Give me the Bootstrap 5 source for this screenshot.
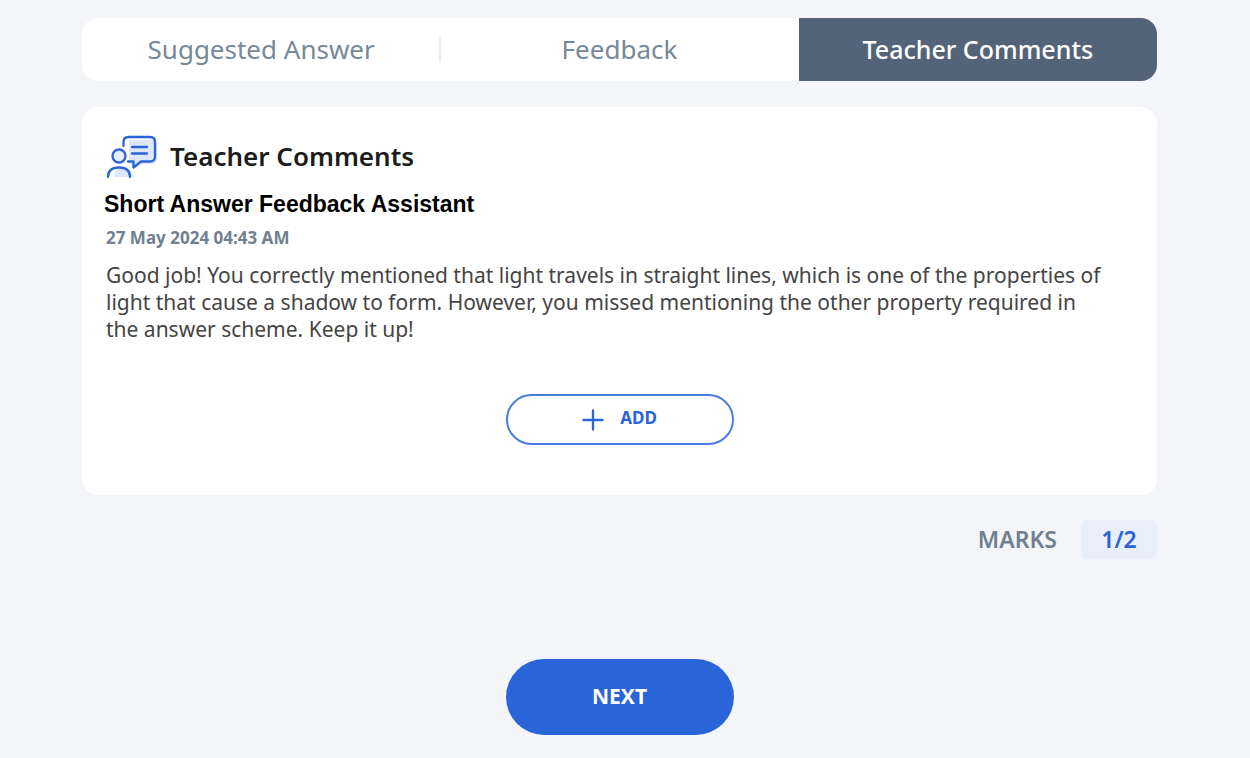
<!DOCTYPE html>
<html lang="en">
<head>
<meta charset="utf-8">
<meta name="viewport" content="width=device-width, initial-scale=1">
<title>Teacher Comments</title>
<link href="https://cdn.jsdelivr.net/npm/bootstrap@5.3.0/dist/css/bootstrap.min.css" rel="stylesheet">
<style>
  :root { --brand: #2a64d9; --slate: #708090; }
  body { background: #f3f5f9; font-family: "Noto Sans", sans-serif; }
  .page { padding: 18px 93px 22px 82px; }
  .tabs { border-radius: 16px; overflow: hidden; }
  .tabs .nav-link { height: 63px; padding: 0; border-radius: 0; font-size: 26px; line-height: 63px; color: #778899; position: relative; }
  .tabs .nav-link.active { background: #546478; color: #fff; font-size: 25px; font-weight: 500; }
  .tabs .divided::after { content: ""; position: absolute; right: -1px; top: 19px; width: 2px; height: 25px; background: #eceef1; }
  .panel { margin-top: 26px; border-radius: 16px; padding: 28px 24px 50px; }
  .title { font-size: 26px; line-height: 42px; font-weight: 600; color: #1c1c1c; }
  .author { font-family: "Liberation Sans", sans-serif; font-size: 23px; line-height: 30px; font-weight: 700; color: #000; margin: 10px 0 0 -2px; }
  .stamp { font-size: 17px; line-height: 24px; font-weight: 700; color: var(--slate); margin-top: 7px; }
  .comment { font-size: 21px; line-height: 27px; color: #444; margin: 12px 0 0; padding-right: 28px; }
  .pill { width: 228px; border-radius: 38px; font-weight: 700; }
  .add { height: 51px; margin-top: 51px; border: 2px solid #4a7ce0; color: var(--brand); font-size: 17px; line-height: 22px; }
  .marks { font-size: 23px; line-height: 39px; font-weight: 600; color: var(--slate); margin-top: 25px; }
  .score { width: 76px; border-radius: 6px; background: #e9eefb; color: var(--brand); }
  .next { height: 76px; margin-top: 100px; background: var(--brand); color: #fff; font-size: 21px; }
  .add:hover, .next:hover { background: #1f52bd; color: #fff; }
</style>
</head>
<body>
<main class="page d-flex flex-column">
  <ul class="nav nav-pills nav-justified tabs bg-white" role="tablist">
    <li class="nav-item" role="presentation"><button class="nav-link divided w-100" type="button" role="tab" aria-selected="false">Suggested Answer</button></li>
    <li class="nav-item" role="presentation"><button class="nav-link w-100" type="button" role="tab" aria-selected="false">Feedback</button></li>
    <li class="nav-item" role="presentation"><button class="nav-link active w-100" type="button" role="tab" aria-selected="true">Teacher Comments</button></li>
  </ul>

  <section class="panel bg-white d-flex flex-column">
    <div class="d-flex align-items-start">
      <svg class="flex-shrink-0" width="64" height="44" viewBox="0 0 64 44" fill="none" aria-hidden="true">
        <g fill="#dfe8fa">
          <path d="M23 5h23q5 0 5 5v14q0 5-5 5H36l-8 5v-5h-5z"/>
          <path d="M8 42q0-9 9-9 9 1 12 9z"/>
        </g>
        <circle cx="13" cy="21" r="7" fill="#e9effc"/>
        <g stroke="#2a64d9" stroke-width="2.3" stroke-linecap="round" stroke-linejoin="round">
          <path d="M17.500 11V7q0-5 5-5H44q5 0 5 5v14.500q0 5-5 5H35l-7.500 6v-6h-5.500"/>
          <path d="M26 12h15M26 18.500h15"/>
          <circle cx="13" cy="21" r="6.500"/>
          <path d="M2 42C2 36 6 32.500 13 32.500S24 36 24 42"/>
        </g>
      </svg>
      <h1 class="title mb-0">Teacher Comments</h1>
    </div>
    <h2 class="author mb-0">Short Answer Feedback Assistant</h2>
    <time class="stamp" datetime="2024-05-27T04:43">27 May 2024 04:43 AM</time>
    <p class="comment">Good job! You correctly mentioned that light travels in straight lines, which is one of the properties of light that cause a shadow to form. However, you missed mentioning the other property required in the answer scheme. Keep it up!</p>
    <div class="d-flex justify-content-center">
      <button class="btn pill add d-flex align-items-center justify-content-center p-0" type="button">
        <svg class="me-3" width="22" height="22" viewBox="0 0 22 22" stroke="currentColor" stroke-width="2.300" stroke-linecap="round" aria-hidden="true"><path d="M1.500 11h19M11 1.500v19"/></svg><span class="pb-1">ADD</span>
      </button>
    </div>
  </section>

  <div class="marks d-flex justify-content-end align-items-center">
    <span>MARKS</span><span class="score text-center ms-4">1/2</span>
  </div>
  <button class="btn pill next align-self-center p-0" type="button">NEXT</button>
</main>
<script src="https://cdn.jsdelivr.net/npm/bootstrap@5.3.0/dist/js/bootstrap.bundle.min.js"></script>
</body>
</html>
